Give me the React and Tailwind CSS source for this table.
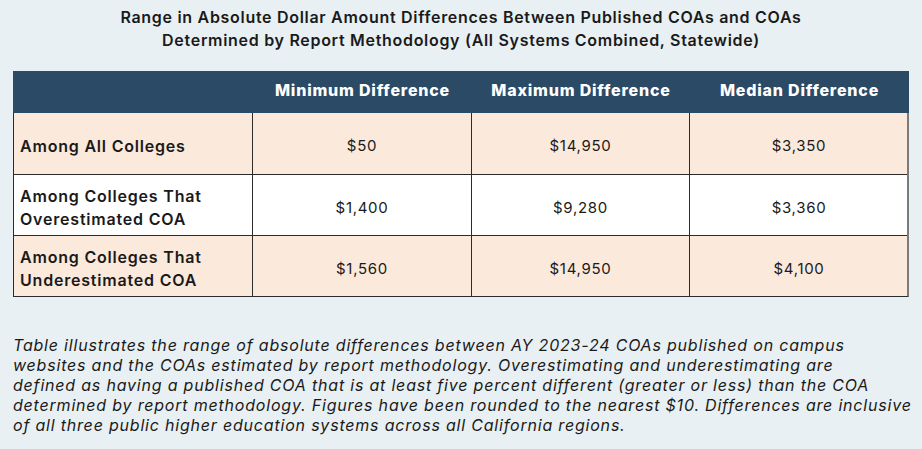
const rows = [
  { label: ['Among All Colleges'], values: ['$50', '$14,950', '$3,350'], bg: 'bg-[#fbe9dc]' },
  { label: ['Among Colleges That', 'Overestimated COA'], values: ['$1,400', '$9,280', '$3,360'], bg: 'bg-white' },
  { label: ['Among Colleges That', 'Underestimated COA'], values: ['$1,560', '$14,950', '$4,100'], bg: 'bg-[#fbe9dc]' },
];

const headers = ['Minimum Difference', 'Maximum Difference', 'Median Difference'];

const caption = [
  'Table illustrates the range of absolute differences between AY 2023-24 COAs published on campus',
  'websites and the COAs estimated by report methodology. Overestimating and underestimating are',
  'defined as having a published COA that is at least five percent different (greater or less) than the COA',
  'determined by report methodology. Figures have been rounded to the nearest $10. Differences are inclusive',
  'of all three public higher education systems across all California regions.',
];

export default function App() {
  return (
    <div className="min-h-screen w-[922px] h-[449px] overflow-hidden bg-[#e8f0f3] text-[#1a1a1a]" style={{ fontFamily: 'Inter, "Open Sans", sans-serif' }}>
      <div className="pt-[6px] text-center text-[16px] font-semibold leading-[23px] tracking-[0.7px]">
        <p>Range in Absolute Dollar Amount Differences Between Published COAs and COAs</p>
        <p>Determined by Report Methodology (All Systems Combined, Statewide)</p>
      </div>

      <div className="ml-[13px] mt-[19px] w-[896px]">
        <div className="grid h-[42px] grid-cols-[240px_219px_218px_219px] items-center bg-[#2a4a66] pb-[4px] text-[16px] font-extrabold tracking-[0.8px] text-white">
          <div />
          {headers.map((h) => (
            <div key={h} className="text-center">{h}</div>
          ))}
        </div>
        <div className="border-l border-b border-r-2 border-[#2b2b2b] border-r-[#7a7a7a]">
          {rows.map((r, i) => (
            <div
              key={i}
              className={`grid h-[61px] grid-cols-[239px_219px_218px_218px] ${r.bg} ${i > 0 ? 'border-t border-[#2b2b2b]' : ''}`}
            >
              <div className="flex flex-col justify-center border-r border-[#2b2b2b] pl-[6px] pt-[6px] text-[16px] font-semibold leading-[23px] tracking-[0.8px]">
                {r.label.map((l) => (
                  <span key={l}>{l}</span>
                ))}
              </div>
              {r.values.map((v, j) => (
                <div
                  key={j}
                  className={`flex items-center justify-center pt-[6px] text-[15px] tracking-[0.7px] ${j < 2 ? 'border-r border-[#2b2b2b]' : ''}`}
                >
                  {v}
                </div>
              ))}
            </div>
          ))}
        </div>
      </div>

      <div className="ml-[13px] mt-[38px] text-[16px] italic leading-[20px] tracking-[0.8px]">
        {caption.map((c) => (
          <p key={c} className="whitespace-nowrap">{c}</p>
        ))}
      </div>
    </div>
  );
}
